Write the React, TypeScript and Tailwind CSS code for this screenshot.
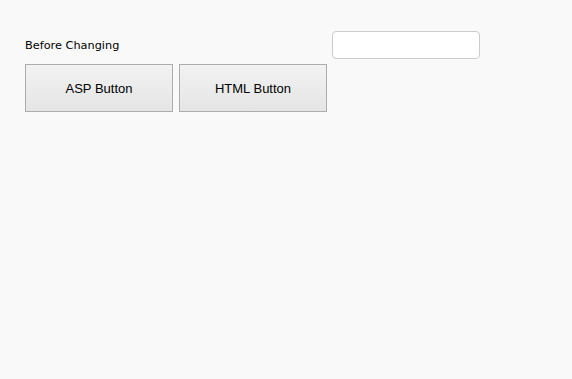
export default function App() {
  return (
    <div className="min-h-[379px] w-full bg-[#f9f9f9] pl-[25px] pt-[31px]">
      <div className="flex items-center">
        <span className="block w-[307px] pt-[2px] font-['DejaVu_Sans',sans-serif] text-[11.3px] text-black">
          Before Changing
        </span>
        <input
          type="text"
          className="h-[28px] w-[148px] rounded-[4px] border border-[#cccccc] bg-white px-1 outline-none"
        />
      </div>
      <div className="mt-[5px] flex gap-[6px]">
        <button className="h-[48px] w-[148px] border border-[#acacac] bg-gradient-to-b from-[#f2f2f2] to-[#e5e5e5] pt-[2px] font-['Liberation_Sans',Arial,sans-serif] text-[13px] text-black">
          ASP Button
        </button>
        <button className="h-[48px] w-[148px] border border-[#acacac] bg-gradient-to-b from-[#f2f2f2] to-[#e5e5e5] pt-[2px] font-['Liberation_Sans',Arial,sans-serif] text-[13px] text-black">
          HTML Button
        </button>
      </div>
    </div>
  );
}
